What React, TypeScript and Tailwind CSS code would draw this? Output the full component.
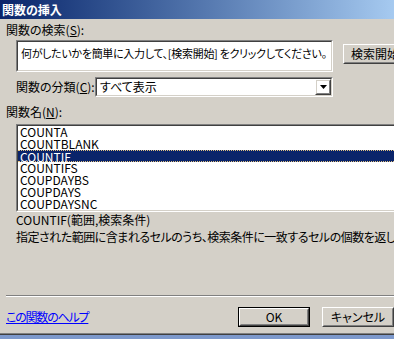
import React from "react";

function Sunken({ className, children }: { className?: string; children?: React.ReactNode }) {
  return (
    <div className={"border border-t-[#808080] border-l-[#808080] border-b-white border-r-white " + (className || "")}>
      <div className="w-full h-full border border-t-[#404040] border-l-[#404040] border-b-[#d4d0c8] border-r-[#d4d0c8] bg-white overflow-hidden">
        {children}
      </div>
    </div>
  );
}

function Raised({ className, children, def }: { className?: string; children?: React.ReactNode; def?: boolean }) {
  const inner = (
    <div className="w-full h-full border border-t-white border-l-white border-b-[#404040] border-r-[#404040]">
      <div className="w-full h-full border border-t-[#d4d0c8] border-l-[#d4d0c8] border-b-[#808080] border-r-[#808080] flex items-center justify-center text-[12px] leading-[14px] text-black whitespace-nowrap">
        {children}
      </div>
    </div>
  );
  if (def) {
    return <div className={"border border-black " + (className || "")}>{inner}</div>;
  }
  return <div className={className}>{inner}</div>;
}

const items = ["COUNTA", "COUNTBLANK", "COUNTIF", "COUNTIFS", "COUPDAYBS", "COUPDAYS", "COUPDAYSNC"];

export default function App() {
  return (
    <div className="w-[394px] h-[339px] overflow-hidden bg-[#d4d0c8] flex flex-col text-black font-['Noto_Sans_CJK_JP','Liberation_Sans',sans-serif] [font-feature-settings:'palt']">
      <div className="h-[19px] shrink-0 bg-gradient-to-r from-[#0a246a] to-[#a6caf0] flex items-center pl-[2px]">
        <span className="text-white font-bold text-[12px] leading-[14px]">関数の挿入</span>
      </div>
      <div className="mt-[4px] pl-[6px] text-[12px] leading-[14px] whitespace-nowrap">関数の検索(<span className="underline">S</span>):</div>
      <div className="mt-[3px] pl-[16px] flex items-start shrink-0">
        <Sunken className="w-[317px] h-[32px] shrink-0">
          <div className="pl-[3px] pt-[4px] text-[11px] tracking-[-0.3px] leading-[14px] whitespace-nowrap">何がしたいかを簡単に入力して、[検索開始] をクリックしてください。</div>
        </Sunken>
        <Raised className="ml-[10px] mt-[4px] w-[64px] h-[20px] shrink-0">検索開始</Raised>
      </div>
      <div className="mt-[5px] pl-[16px] flex items-center shrink-0">
        <div className="w-[79px] text-[12px] leading-[14px] whitespace-nowrap">関数の分類(<span className="underline">C</span>):</div>
        <Sunken className="w-[238px] h-[20px] shrink-0">
          <div className="flex h-full items-center">
            <div className="flex-1 pl-[3px] text-[12px] leading-[14px] whitespace-nowrap">すべて表示</div>
            <Raised className="w-[16px] h-[16px] shrink-0">
              <svg width="7" height="4" viewBox="0 0 7 4"><path d="M0 0h7L3.5 4z" fill="#000" /></svg>
            </Raised>
          </div>
        </Sunken>
      </div>
      <div className="mt-[8px] pl-[6px] text-[12px] leading-[14px] whitespace-nowrap">関数名(<span className="underline">N</span>):</div>
      <div className="mt-[5px] pl-[16px] shrink-0">
        <Sunken className="w-[420px] h-[88px]">
          <div className="flex flex-col">
            {items.map((it) => (
              <div
                key={it}
                className={
                  "h-[12px] pl-[2px] text-[12px] leading-[12px] whitespace-nowrap " +
                  (it === "COUNTIF" ? "bg-[#0a246a] text-white border-y border-dotted border-[#e0c080]" : "")
                }
              >
                {it}
              </div>
            ))}
          </div>
        </Sunken>
      </div>
      <div className="mt-[1px] pl-[16px] text-[12px] leading-[14px] whitespace-nowrap">COUNTIF(範囲,検索条件)</div>
      <div className="mt-[3px] pl-[16px] text-[12px] tracking-[-0.5px] leading-[14px] whitespace-nowrap">指定された範囲に含まれるセルのうち、検索条件に一致するセルの個数を返します。</div>
      <div className="mt-[51px] ml-[6px] shrink-0">
        <div className="h-[1px] bg-[#808080]" />
        <div className="h-[1px] bg-white" />
      </div>
      <div className="mt-[10px] flex items-center h-[20px] shrink-0">
        <div className="pl-[6px] w-[266px] text-[12px] tracking-[-1.2px] leading-[14px] whitespace-nowrap">
          <span className="text-[#0000ff] underline">この関数のヘルプ</span>
        </div>
        <Raised def className="w-[72px] h-[20px] shrink-0">OK</Raised>
        <Raised className="ml-[12px] w-[72px] h-[20px] shrink-0">キャンセル</Raised>
      </div>
      <div className="mt-[6px] h-[1px] bg-[#808080] shrink-0" />
      <div className="h-[1px] bg-[#404040] shrink-0" />
      <div className="flex-1 bg-[#7d99cc]" />
    </div>
  );
}
